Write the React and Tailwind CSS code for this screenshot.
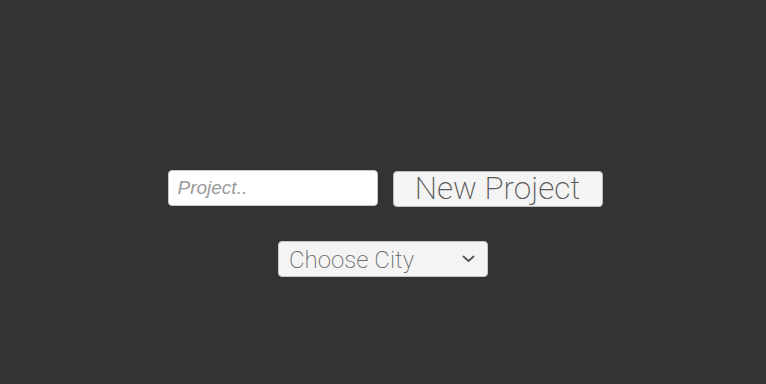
import React from "react";

export default function App() {
  return (
    <div className="w-full h-[384px] bg-[#333333] flex flex-col items-center pt-[170px]">
      <div className="flex items-start gap-[15px] pl-[4px]">
        <input
          type="text"
          placeholder="Project.."
          className="w-[210px] h-[36px] rounded-[4px] bg-white border border-[#c8c8c8] px-[9px] text-[19px] italic text-[#555] placeholder:text-[#9a9a9a] outline-none"
          style={{ fontFamily: '"Liberation Sans", Arial, sans-serif' }}
        />
        <button
          className="mt-[1px] w-[210px] h-[36px] rounded-[4px] bg-[#f4f4f4] border border-[#bdbdbd] text-[31.5px] leading-none font-extralight text-[#5a5a5a] flex items-center justify-center"
          style={{ fontFamily: 'Roboto, sans-serif' }}
        >
          New Project
        </button>
      </div>
      <div className="relative mt-[34px] w-[210px] h-[36px]">
        <select
          className="appearance-none w-full h-full rounded-[4px] bg-[#f4f4f4] border border-[#c8c8c8] pl-[10px] text-[24px] font-extralight text-[#6a6a6a] outline-none"
          style={{ fontFamily: 'Roboto, sans-serif' }}
          defaultValue=""
        >
          <option value="">Choose City</option>
        </select>
        <svg
          className="absolute right-[13px] top-[14px] pointer-events-none"
          width="13"
          height="8"
          viewBox="0 0 13 8"
          fill="none"
        >
          <path d="M1.5 1.5 L6.5 6 L11.5 1.5" stroke="#555" strokeWidth="1.8" strokeLinecap="round" strokeLinejoin="round" />
        </svg>
      </div>
    </div>
  );
}
